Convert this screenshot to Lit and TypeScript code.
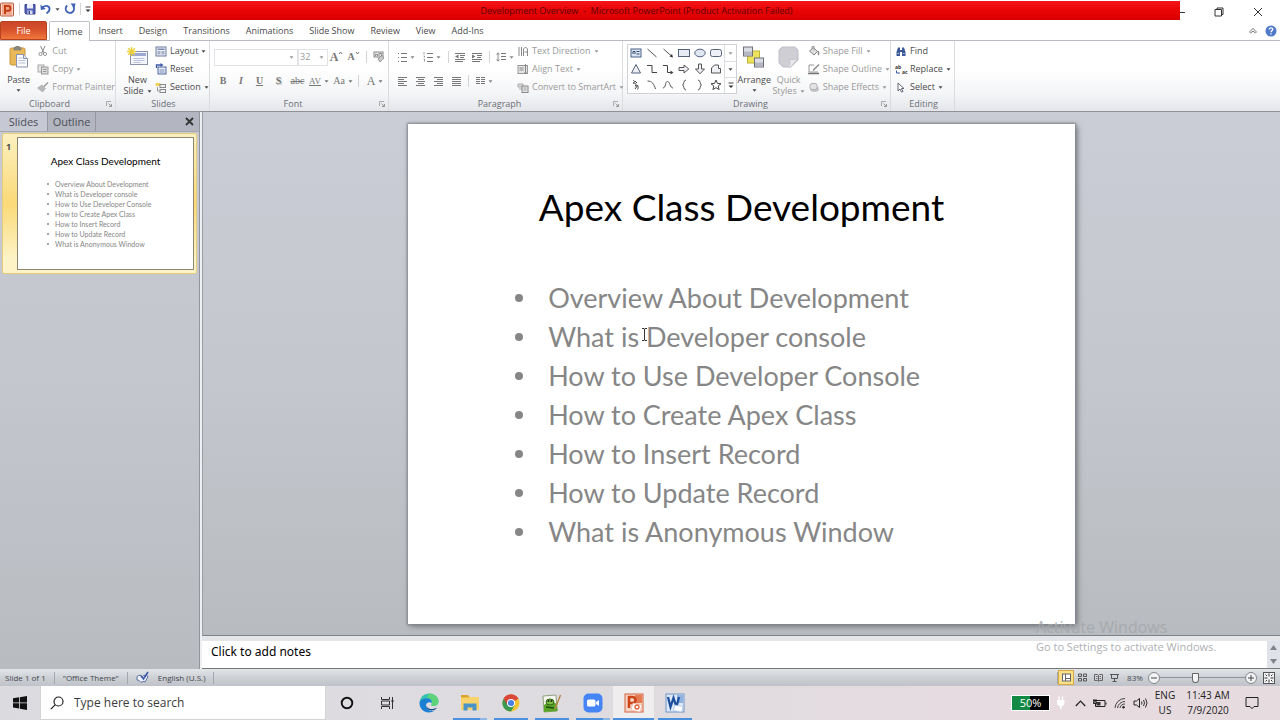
import { LitElement, html, css, svg } from "lit";
import { customElement, state } from "lit/decorators.js";
import { classMap } from "lit/directives/class-map.js";

const icon = (w: number, h: number, body: unknown) =>
  html`<svg width=${w} height=${h} viewBox="0 0 ${w} ${h}" fill="none" aria-hidden="true">${body}</svg>`;

const caret = html`<svg class="caret" width="5" height="3" viewBox="0 0 5 3" aria-hidden="true"><path d="M0.5 0.3h4L2.5 2.8z" fill="currentColor"/></svg>`;

const lines = (rows: number[][], color = "#777") =>
  rows.map(([x, y, w]) => svg`<rect x=${x} y=${y} width=${w} height="1" fill=${color}/>`);

const I = {
  ppt: icon(15, 15, svg`<rect x="0.5" y="1" width="13" height="13" rx="1" fill="#f8d9cd" stroke="#b5583c"/><rect x="2" y="2" width="10" height="11" fill="#f3a98d"/><path d="M5 12V4h3a2.3 2.3 0 0 1 0 4.8H5" stroke="#c43e14" stroke-width="2"/>`),
  save: icon(12, 12, svg`<path d="M1 1.5h10v9.500H2L1 10z" fill="#5360b8" stroke="#39448f"/><rect x="3" y="1" width="6" height="4.500" fill="#eef1fb"/><rect x="3.500" y="7.500" width="5" height="3.500" fill="#d9def0"/><rect x="4.500" y="8" width="1.500" height="3" fill="#39448f"/>`),
  undo: icon(12, 12, svg`<path d="M2.500 4.500C6 1.500 10 3 9.500 6.500 9.200 8.500 8 9.500 6.500 10.500" stroke="#3f62b5" stroke-width="1.800"/><path d="M0.500 1.500l0.300 5.500 5-1z" fill="#3f62b5"/>`),
  redo: icon(12, 12, svg`<path d="M3.200 2.500a4.200 4.200 0 1 0 5.800 0.500" stroke="#3f62b5" stroke-width="1.800"/><path d="M6.500 0.500h5l-1 5z" fill="#3f62b5"/>`),
  customize: icon(6, 7, svg`<path d="M0.500 1h5" stroke="#444"/><path d="M0.500 3.500h5L3 6z" fill="#333"/>`),
  min: icon(5, 10, svg`<path d="M0 5.500h5" stroke="#333"/>`),
  restore: icon(10, 10, svg`<path d="M1 2.500h6.500V9H1zM3 2.500V1h6v6.500H7.500" stroke="#333"/>`),
  close: icon(10, 10, svg`<path d="M1 1l8 8M9 1l-8 8" stroke="#333"/>`),
  collapse: icon(8, 8, svg`<path d="M1.500 6a1.300 1.300 0 0 1 0-2.200L4 1.500l2.500 2.300a1.300 1.300 0 0 1 0 2.200L4 4.200z" stroke="#777"/>`),
  help: icon(12, 12, svg`<circle cx="6" cy="6" r="5.500" fill="#4f79c8"/><path d="M4.200 4.600C4.200 2.200 8 2.300 7.800 4.500 7.700 5.700 6 5.600 6 7.300M6 8.300v1.300" stroke="#fff" stroke-width="1.300"/>`),
  paste: icon(19, 22, svg`<rect x="1" y="2" width="15" height="17" rx="1.500" fill="#e9b959" stroke="#c7963d"/><path d="M5 4V1.500h1.500a2 2 0 0 1 4 0H12V4z" fill="#8a8a80" stroke="#6d6d66" stroke-width="0.500"/><path d="M7.500 8.500h7l4 4v8.500h-11z" fill="#fbfbfe" stroke="#8590ad"/><path d="M14.500 8.500v4h4" fill="#dfe4f2" stroke="#8590ad"/><path d="M9.500 12h4M9.500 14.500h7M9.500 17h7" stroke="#b8c0d6"/>`),
  cut: icon(10, 12, svg`<path d="M2.500 1l3.500 7M7 1L3.800 8" stroke="#888"/><circle cx="2.500" cy="9" r="1.600" stroke="#999"/><circle cx="7" cy="9" r="1.600" stroke="#999"/>`),
  copy: icon(12, 11, svg`<rect x="1" y="1" width="6" height="7" fill="#e6e6e6" stroke="#aaa"/><rect x="4.500" y="3" width="6.500" height="7" fill="#ddd" stroke="#999"/><path d="M6 5.500h3.500M6 7.500h3.500" stroke="#999"/>`),
  brush: icon(12, 11, svg`<path d="M11 0.500L7 4.500" stroke="#999" stroke-width="1.500"/><path d="M5 3l3.500 3.500L5.500 10 0.500 6z" fill="#b9b9b9" stroke="#999" stroke-width="0.500"/>`),
  newSlide: icon(22, 20, svg`<rect x="3.500" y="4.500" width="17" height="13" fill="#f4f6fc" stroke="#8a93ae"/><rect x="5" y="6" width="14" height="3" fill="#9aa8d2"/><path d="M6.500 11.500h11M6.500 13.500h11M6.500 15.500h7" stroke="#bcc5dd"/><path d="M4.500 0v9M0 4.500h9M1.200 1.200l6.600 6.600M7.800 1.200L1.200 7.800" stroke="#edcf3a" stroke-width="1.400"/>`),
  layout: icon(11, 11, svg`<rect x="0.500" y="1" width="10" height="9" fill="#eef1f8" stroke="#6b7899"/><rect x="2" y="2.500" width="7" height="1.500" fill="#7788b3"/><rect x="2" y="5" width="3" height="3.500" fill="#a4aec8"/><rect x="6" y="5" width="3" height="3.500" fill="#a4aec8"/>`),
  reset: icon(11, 12, svg`<rect x="2.500" y="4" width="8" height="7" fill="#e6ebf7" stroke="#51669f"/><path d="M4 7h5M4 9h5" stroke="#7c8dbb"/><path d="M1 5V2h5" stroke="#3c5aa8" stroke-width="1.400"/><path d="M5 0l3 2-3 2z" fill="#3c5aa8"/>`),
  section: icon(11, 11, svg`<path d="M0 1h5v3H0z" fill="#eed45a"/><rect x="4.500" y="2.500" width="5.500" height="3" fill="#eef1f6" stroke="#888"/><rect x="4.500" y="7.500" width="5.500" height="3" fill="#eef1f6" stroke="#888"/><path d="M2 5v4h2" stroke="#999"/>`),
  launcher: icon(6, 6, svg`<path d="M0.500 5V0.500H5" stroke="#aaa"/><path d="M2.500 2.500l3 3M5.500 3v2.500H3" stroke="#999"/>`),
  eraser: icon(12, 12, svg`<rect x="1" y="1" width="9" height="5" fill="#e6e6e6" stroke="#888"/><path d="M2.500 5V3.500h2V5M6 5V2.500h2.500V5" stroke="#777" stroke-width="0.800"/><path d="M5 8l4-3.500L11 7l-4 4z" fill="#ccc" stroke="#888" stroke-width="0.800"/>`),
  grow: icon(5, 4, svg`<path d="M1 3l1.500-2L4 3" stroke="#777"/>`),
  shrink: icon(5, 4, svg`<path d="M1 1l1.500 2L4 1" stroke="#777"/>`),
  bullets: icon(9, 10, [...lines([[3, 1, 6], [3, 5, 6], [3, 9, 6], [0, 1, 1], [0, 5, 1], [0, 9, 1]])]),
  numbering: icon(10, 10, [...lines([[4, 1, 6], [4, 5, 6], [4, 9, 6]]), svg`<path d="M1 0v2.500M0.500 4h1v1.500M0.500 7h1v2.500" stroke="#888" stroke-width="0.800"/>`]),
  outdent: icon(11, 9, [...lines([[1, 0, 10], [6, 2, 5], [6, 4, 4], [1, 6, 10], [1, 8, 8]]), svg`<path d="M4.500 1.500v4L1 3.500z" fill="#777"/>`]),
  indent: icon(11, 9, [...lines([[1, 0, 10], [6, 2, 5], [6, 4, 4], [1, 6, 10], [1, 8, 8]]), svg`<path d="M1 1.500v4l3.500-2z" fill="#777"/>`]),
  spacing: icon(10, 10, [...lines([[5, 1, 5], [5, 4, 5], [5, 7, 5]]), svg`<path d="M2 1v8M0.500 2.500L2 0.800l1.500 1.700M0.500 7.500L2 9.200l1.500-1.700" stroke="#888"/>`]),
  left: icon(9, 9, lines([[0, 0, 9], [0, 2, 6], [0, 4, 9], [0, 6, 6], [0, 8, 9]])),
  center: icon(9, 9, lines([[0, 0, 9], [2, 2, 6], [0, 4, 9], [2, 6, 6], [0, 8, 9]])),
  right: icon(9, 9, lines([[0, 0, 9], [3, 2, 6], [0, 4, 9], [3, 6, 6], [0, 8, 9]])),
  justify: icon(9, 9, lines([[0, 0, 9], [0, 2, 9], [0, 4, 9], [0, 6, 9], [0, 8, 9]])),
  columns: icon(9, 9, lines([[0, 0, 4], [5, 0, 4], [0, 2, 4], [5, 2, 4], [0, 4, 4], [5, 4, 4], [0, 6, 4], [5, 6, 4]])),
  textDir: icon(11, 11, svg`<path d="M1.500 1v9M4 1v9M6 10V3l2-2 2 2v7M7 6h3" stroke="#888"/>`),
  alignText: icon(11, 11, svg`<rect x="0.500" y="1.500" width="9.500" height="8" fill="#e4e4e4" stroke="#999"/><path d="M2 4h4M2 6h4M8 0v10M7 2l1-1.500L9 2M7 8.500l1 1.500 1-1.500" stroke="#888"/>`),
  smartArt: icon(11, 11, svg`<path d="M0.500 2h5v3h-5zM1.500 7h3" fill="#ddd" stroke="#aaa"/><rect x="4.500" y="4" width="6" height="6.500" fill="#e9e9e9" stroke="#888"/><path d="M6 6h3M6 8h3" stroke="#999"/>`),
  arrange: icon(22, 21, svg`<rect x="4.500" y="4.500" width="12" height="12" fill="#ece25c" stroke="#bdb335"/><rect x="0.500" y="0.500" width="9" height="9" fill="#dcdde4" stroke="#6e6f7a"/><path d="M1 5h8v4H1z" fill="#b5b7c2"/><rect x="11.500" y="11.500" width="9" height="9" fill="#dcdde4" stroke="#6e6f7a"/><path d="M12 16h8v4h-8z" fill="#b5b7c2"/>`),
  quick: icon(21, 22, svg`<path d="M4 1h13l3 3v10l-7 7H5l-4-4V4z" fill="#cfced5" stroke="#c0bfc7"/><path d="M20 12c-3 2-7 2-9 1 2 3 1 6-1 8h3z" fill="#e8e8ec" stroke="#b5b5bd" stroke-width="0.500"/>`),
  fill: icon(11, 11, svg`<path d="M1 5l4-3.500 4 4L5.500 9z" fill="#ddd" stroke="#888"/><path d="M3.500 3V0.500h2V4" stroke="#999"/><path d="M9 5c1.500 1.500 1.500 3 0.500 4" stroke="#888" stroke-width="1.300"/>`),
  outline: icon(12, 11, svg`<path d="M6 1H1v7h9" stroke="#999"/><path d="M11 0.500L5 6.500" stroke="#888" stroke-width="1.400"/><path d="M0 9.500h11" stroke="#777" stroke-width="1.500"/>`),
  effects: icon(11, 11, svg`<ellipse cx="6" cy="7" rx="4.500" ry="3" fill="#c4c4c8"/><rect x="1.500" y="1.500" width="7" height="6" rx="2" fill="#e2e2e5" stroke="#b0b0b4"/>`),
  find: icon(11, 11, svg`<path d="M1 10V6l1.500-4.500h2V10zM10 10V6L8.500 1.500h-2V10z" fill="#3b5998"/><path d="M4 4h3v2H4z" fill="#3b5998"/><path d="M1.800 7.500h1.800M7.300 7.500h1.800" stroke="#a9bbe2"/>`),
  replace: icon(12, 12, svg`<text x="0" y="6" class="g">ab</text><text x="7" y="11" class="g">ac</text><path d="M1.500 7.500v2.500h3.500" stroke="#3b5998"/>`),
  select: icon(8, 11, svg`<path d="M1 1v8l2-2 1.500 3L6 9.500 4.500 6.500H7z" fill="#fff" stroke="#667"/>`),
  spell: icon(14, 13, svg`<path d="M1 5.500C3 4 5 4 6.500 5.500 8 4 10 4 12 5.500L9 11c-1.500-1-3-.5-4 .5C4 10 2.500 9 1 9z" fill="#eef1fa" stroke="#5b70a5"/><path d="M5 5l2.500 3L12 1" stroke="#3b57a6" stroke-width="1.600"/>`),
  vNormal: icon(9, 9, svg`<rect x="0.500" y="1" width="8" height="7" fill="#fff" stroke="#666"/><path d="M3.500 1v7M3.500 5.500h5" stroke="#666"/>`),
  vSorter: icon(9, 9, svg`<path d="M0.500 1h3v2.500h-3zM5.500 1h3v2.500h-3zM0.500 5.500h3V8h-3zM5.500 5.500h3V8h-3z" stroke="#555"/>`),
  vRead: icon(9, 9, svg`<path d="M4.500 2v6M0.500 1.500h3l1 1 1-1h3v6h-3l-1 1-1-1h-3z" stroke="#666"/><path d="M2 3.500h1.500M2 5.500h1.500M5.500 3.500H7M5.500 5.500H7" stroke="#777"/>`),
  vShow: icon(9, 9, svg`<path d="M0 1.500h9M1.500 1.500v4h6v-4M4.500 5.500V8M2.500 8.500h4" stroke="#555"/>`),
  fit: icon(12, 12, svg`<rect x="0.500" y="0.500" width="11" height="11" fill="#f2f3f5" stroke="#555"/><path d="M6 1.500v3M6 7.500v3M1.500 6h3M7.500 6h3M2.500 2.500L4 4M9.500 2.500L8 4M2.500 9.500L4 8M9.500 9.500L8 8" stroke="#333"/>`),
  windows: icon(14, 14, svg`<path d="M0 2.200L6 1.300v5.200H0zM6.800 1.200L14 0v6.500H6.800zM0 7.300h6v5.200l-6-.9zM6.800 7.300H14V14l-7.200-1.200z" fill="#111"/>`),
  search: icon(14, 14, svg`<circle cx="8.500" cy="5.500" r="4.500" stroke="#222" stroke-width="1.200"/><path d="M5.300 8.700L0.800 13.200" stroke="#222" stroke-width="1.200"/>`),
  cortana: icon(14, 14, svg`<circle cx="7" cy="7" r="5.300" stroke="#111" stroke-width="1.900"/>`),
  taskView: icon(15, 14, svg`<path d="M1.500 1v2.500h8V1M1.500 13v-2.500h8V13M1.500 5h8v4h-8zM12.500 1v12" stroke="#333"/><rect x="11.500" y="4" width="2" height="2" fill="#333"/>`),
  edge: icon(20, 20, svg`<path d="M0.500 10C1 4 5 0.500 10 0.500c6 0 9.500 4 9.500 8 0 3-2.500 4.500-5 4.500-2 0-2.500-.8-2-1.700C13.500 9 11.500 6.500 8 6.500 4 6.500 1 8.500 0.500 10z" fill="#35c1b1"/><path d="M10 0.500c6 0 9.500 4 9.500 8 0 3-2.500 4.500-5 4.500-2 0-2.500-.8-2-1.700C14 8 12 5 8 4.500z" fill="#5fd37a"/><path d="M0.500 10C1 7 4 5.500 7.500 5.500c3.500 0 5.500 2 5.300 4.500C11 8.500 7 9 7 12.500c0 3.500 4 6.500 9 5C9 22 .5 18 0.500 10z" fill="#1b7fd4"/><path d="M7 12c-.3 4 4 6.500 8 5 1.500-.6 2.500-1.500 3-2.500-5 3-11 1-11-2.500z" fill="#114a8b"/>`),
  folder: icon(20, 18, svg`<path d="M1 1h7l2 2h9v13H1z" fill="#f8d36b"/><path d="M1 1h7l1.500 2.500H1z" fill="#d9a52f"/><path d="M3.500 16.500V9.500h13v7h-4v-3h-5v3z" fill="#4a93c8"/>`),
  chrome: icon(18, 18, svg`<circle cx="9" cy="9" r="8.500" fill="#f3c532"/><path d="M9 9L1.600 4.700A8.500 8.500 0 0 1 16.400 4.700z" fill="#d8473a"/><path d="M9 9L1.600 4.700A8.500 8.500 0 0 0 9 17.500l3.700-6.300z" fill="#3a9a52"/><path d="M9 5h7.500a8.500 8.500 0 0 0-14.800-.3L5.300 11z" fill="#d8473a"/><circle cx="9" cy="9" r="4" fill="#fff"/><circle cx="9" cy="9" r="3.100" fill="#4a80e4"/>`),
  notepad: icon(20, 19, svg`<path d="M1 2l13-1 1 16-13 1z" fill="#f6f8ef" stroke="#8fa07e"/><path d="M2 11c4-3 9-3 13-1l.5 7L2 18z" fill="#5aa628"/><ellipse cx="8" cy="8" rx="4" ry="3" fill="#7fc142" stroke="#2e641a"/><circle cx="6.500" cy="7" r="1" fill="#222"/><circle cx="9.500" cy="7" r="1" fill="#222"/><path d="M4 13l8 1" stroke="#1e4d12" stroke-width="1.500"/><path d="M18.500 1L13 15" stroke="#b98a4a" stroke-width="1.500"/>`),
  zoom: icon(20, 20, svg`<rect x="0.500" y="0.500" width="19" height="19" rx="5" fill="#4585f5"/><rect x="4" y="6.500" width="8.500" height="7" rx="1.500" fill="#fff"/><path d="M13 9l3-2v6l-3-2z" fill="#fff"/>`),
  pptBig: icon(20, 20, svg`<rect x="1" y="1" width="18" height="18" fill="#f7d6c8" stroke="#d0623c"/><path d="M11 2h7v8h-7z" fill="#e57b50"/><path d="M5 15V4h3.500a3 3 0 0 1 0 6H5" stroke="#cf4416" stroke-width="2.600"/><path d="M9 10l9 2-2 7-9-2z" fill="#fff" stroke="#e0a590" stroke-width="0.600"/><circle cx="13" cy="14" r="2" stroke="#e0603a" stroke-width="1.300"/>`),
  word: icon(20, 20, svg`<rect x="1" y="1" width="18" height="18" fill="#dfe9f7" stroke="#6f93c6"/><path d="M12 2h6v8h-6z" fill="#8fb2e0"/><path d="M3 4l2.500 10L8.500 5l3 9L14 4" stroke="#1c4f9f" stroke-width="2.300"/><path d="M10 12l8 1.500-1.500 5.500-8-1.500z" fill="#fff" stroke="#9db9df" stroke-width="0.600"/>`),
  plug: icon(9, 14, svg`<path d="M3 0.500V4M6.500 0.500V4" stroke="#fff" stroke-width="1.300"/><path d="M1 4h7.500v3a3.500 3.500 0 0 1-3 3.200V13H4v-2.800A3.500 3.500 0 0 1 1 7z" fill="#fff"/>`),
  up: icon(11, 7, svg`<path d="M0.800 6L5.500 1.200 10.200 6" stroke="#222" stroke-width="1.200"/>`),
  battery: icon(14, 9, svg`<path d="M4 1.500h8v6H2.500V5" stroke="#222"/><path d="M13 3.500v2" stroke="#222"/><path d="M0 1.500h4M1 0v3M3 0v3M0.500 3h3v1.500h-3z" stroke="#222"/><rect x="3.500" y="3" width="4" height="3.500" fill="#333"/>`),
  wifi: icon(12, 12, svg`<path d="M1 11A10 10 0 0 1 11 1.500M3.500 11A7.500 7.500 0 0 1 11 4.500M6 11a5 5 0 0 1 5-4" stroke="#444"/><circle cx="9.500" cy="10.300" r="1.200" fill="#222"/>`),
  sound: icon(15, 12, svg`<path d="M1 4h2.500L6.500 1.500v9L3.500 8H1z" stroke="#222"/><path d="M8.500 4.500q1 1.500 0 3M10.500 3q2 3 0 6M12.500 1.500q3 4.500 0 9" stroke="#333"/>`),
  notify: icon(14, 14, svg`<path d="M1 1.500h12v9H9L7 12.700 5 10.500H1z" stroke="#222"/>`),
};

const shapes = [
  svg`<rect x="1" y="2" width="10" height="8" fill="#dbe6f5" stroke="#4a5f87"/><path d="M3 7V4.500h2V7M6.500 4.500h3M6.500 7h3" stroke="#34496f"/>`,
  svg`<path d="M1.500 2l9 8" stroke="#555"/>`,
  svg`<path d="M1.500 2l8 7" stroke="#555"/><path d="M11 10.500L7.500 9.500 10 7z" fill="#333"/>`,
  svg`<rect x="0.500" y="2.500" width="11" height="7" fill="#e6ebf4" stroke="#55627d"/>`,
  svg`<ellipse cx="6" cy="6" rx="5.200" ry="3.800" fill="#dfe7f3" stroke="#55627d"/>`,
  svg`<rect x="0.500" y="2.500" width="11" height="7" rx="2" fill="#eef0f5" stroke="#55627d"/>`,
  svg`<path d="M6 1.500l4.500 8.500h-9z" fill="#eef0f5" stroke="#55627d"/>`,
  svg`<path d="M1 2.500h5v7h5" stroke="#444"/>`,
  svg`<path d="M1 2.500h4.500v7H9" stroke="#444"/><path d="M11.500 9.500L8.500 7.500v4z" fill="#444"/>`,
  svg`<path d="M1 4.500h5V2l4.800 4L6 10V7.500H1z" fill="#eef0f5" stroke="#555"/>`,
  svg`<path d="M4.500 1v5H1.500L6 10.800 10.500 6h-3V1z" fill="#eef0f5" stroke="#555"/>`,
  svg`<path d="M1.500 10V5l3-3h4v3.500h2V10z" fill="#eef0f5" stroke="#555"/>`,
  svg`<path d="M3 1.500c2 0 2 2 0 2.500 3 0 4 1 2 3 3-1 4 1 2.500 3.500M5 2l2 2M8 6l-3 4" stroke="#444"/>`,
  svg`<path d="M1.500 2C6 2 8 5 9.500 10" stroke="#555"/>`,
  svg`<path d="M1 9c3 0 2-6.500 4.500-6.500S8 9 11 9" stroke="#555"/>`,
  svg`<path d="M8 1C5 1 6.500 5.500 4.500 6 6.500 6.500 5 11 8 11" stroke="#555"/>`,
  svg`<path d="M4 1c3 0 1.500 4.500 3.500 5C5.500 6.500 7 11 4 11" stroke="#555"/>`,
  svg`<path d="M6 1l1.400 3.400 3.600.3-2.800 2.300.9 3.600L6 8.700l-3.100 1.900.9-3.600L1 4.700l3.600-.3z" stroke="#444"/>`,
];

const topics = [
  "Overview About Development",
  "What is Developer console",
  "How to Use Developer Console",
  "How to Create Apex Class",
  "How to Insert Record",
  "How to Update Record",
  "What is Anonymous Window",
];

const tabs = ["Home", "Insert", "Design", "Transitions", "Animations", "Slide Show", "Review", "View", "Add-Ins"];

@customElement("slide-page")
class SlidePage extends LitElement {
  static styles = css`
    :host { display: block; background: #fff; color: #000; font-family: Lato, "Open Sans", sans-serif; }
    h1 { margin: 0; text-align: center; font-weight: 400; font-size: 37px; line-height: 48px; padding-top: 59px; }
    ul { list-style: none; margin: 0; padding: 47px 0 0 107px; color: #868686; }
    li { display: grid; grid-template-columns: 33px 1fr; align-items: center; font-size: 27px; line-height: 39px; white-space: nowrap; }
    li::before { content: ""; width: 8px; height: 8px; border-radius: 50%; background: #868686; }
    :host([compact]) h1 { font-size: 10px; line-height: 12px; padding-top: 17px; }
    :host([compact]) ul { padding: 12px 0 0 29px; }
    :host([compact]) li { font-size: 7px; line-height: 10px; grid-template-columns: 8px 1fr; }
    :host([compact]) li::before { width: 2px; height: 2px; }
  `;
  render() {
    return html`<h1>Apex Class Development</h1><ul>${topics.map((t) => html`<li>${t}</li>`)}</ul>`;
  }
}

@customElement("app-root")
class AppRoot extends LitElement {
  @state() private tab = "Home";

  static styles = css`
    :host { display: flex; flex-direction: column; height: 100vh; overflow: hidden; position: relative;
      font: 9px/12px "Open Sans", "Noto Sans", sans-serif; color: #4a4a4a; background: #fff; }
    * { box-sizing: border-box; }
    svg { display: block; flex: none; }
    button { font: inherit; color: inherit; background: none; border: 0; padding: 0; margin: 0; display: flex; align-items: center; justify-content: center; gap: 3px; white-space: nowrap; }
    .g { font: bold 5px/5px "Open Sans", sans-serif; fill: #333; }
    .dim { color: #999; }
    .sep { flex: none; width: 1px; height: 12px; background: #d2d4d8; justify-self: center; }

    .titlebar { display: flex; height: 20px; flex: none; }
    .quick { width: 93px; display: flex; align-items: center; gap: 4px; padding-bottom: 2px; }
    .title { flex: 1; margin-top: 1px; display: flex; align-items: center; justify-content: center; background: linear-gradient(#f5161a, #e80405 50%, #d90000); color: #5c0505; }
    .window { width: 100px; display: flex; align-items: center; justify-content: space-between; padding: 4px 17px 0 0; }

    .tabs { display: flex; height: 21px; flex: none; padding-top: 1px; border-bottom: 1px solid #b9bcc3; }
    .file { width: 47px; color: #fff; margin-right: 2px; border-radius: 2px 2px 0 0; border: 1px solid #b8421e; background: linear-gradient(#c9472a, #d7502b 45%, #f0793c); }
    .tab { padding: 0 7px; border: 1px solid transparent; border-bottom: 0; }
    .tab.on { background: #fff; border-color: #bfc2c8; border-radius: 2px 2px 0 0; margin-bottom: -1px; }
    .tools { margin-left: auto; display: flex; align-items: center; gap: 8px; padding-right: 3px; }

    .ribbon { display: flex; height: 71px; flex: none; background: linear-gradient(#fff 40%, #f4f5f7 75%, #e4e6ea); border-bottom: 1px solid #8d9096; }
    .group { display: flex; flex-direction: column; border-right: 1px solid #dadce0; padding: 1px 0 0 4px; }
    .body { flex: 1; display: flex; }
    .foot { display: grid; align-items: center; text-align: center; height: 14px; padding-right: 2px; color: #6c6f76; }
    .foot.launch { grid-template-columns: 1fr 14px; }
    .foot button { justify-content: flex-end; padding-right: 1px; }
    .clip { width: 116px; padding-left: 0; } .slides { width: 94px; } .font { width: 179px; } .para { width: 234px; } .draw { width: 268px; } .edit { width: 64px; }
    .big { flex-direction: column; justify-content: flex-start; gap: 0; width: 37px; padding-top: 4px; }
    .clip .big { width: 38px; }
    .big > svg:first-child { height: 22px; margin-bottom: 6px; }
    .big .caret { margin-top: 3px; }
    .big .row { display: flex; align-items: center; gap: 3px; line-height: 10px; }
    .big .row .caret { margin-top: 0; }
    .slides .big { width: 35px; }
    .list { display: grid; grid-template-rows: repeat(3, 18px); justify-items: start; align-content: start; }
    .list button > svg:first-child { width: 12px; overflow: visible; }
    .draw .list { padding-left: 2px; }
    .stack { display: grid; grid-template-rows: 24px 24px; align-content: start; padding-top: 3px; color: #888; }
    .cells { display: grid; align-items: center; }
    .f1 { grid-template-columns: 84px 30px 17px 17px 8px 18px; }
    .f2 { grid-template-columns: 18px 18px 19px 19px 19px 24px 24px 6px 28px; }
    .p1 { grid-template-columns: 26px 26px 6px 17px 17px 8px 24px; }
    .p2 { grid-template-columns: 18px 18px 18px 18px 6px 26px; }
    .pick { display: flex; align-items: center; border: 1px solid #e2e3e6; height: 17px; padding-right: 3px; color: #999; background: #fff; }
    .pick select { appearance: none; border: 0; background: none; font: inherit; color: inherit; flex: 1; min-width: 0; padding: 0 0 0 1px; }
    .serif { font: 700 10px/12px "Liberation Serif", serif; color: #777; }
    .sized { gap: 0; align-items: flex-start; }
    .i { font-style: italic; } .u { text-decoration: underline; } .s { text-decoration: line-through; font-weight: 400; }
    .shade { text-shadow: 1px 1px 0 #bbb; }
    .lg { font-size: 12px; } .kern { text-decoration: underline; font-weight: 400; font-size: 9px; }
    .av { font-weight: 400; }
    .gallery { display: grid; grid-template-columns: 1fr 12px; width: 110px; height: 50px; border: 1px solid #cfd1d6; background: #fff; margin-top: 2px; }
    .shapes { display: grid; grid-template-columns: repeat(6, 16px); grid-template-rows: repeat(3, 16px); }
    .scroll { display: grid; grid-template-rows: repeat(3, 1fr); border-left: 1px solid #dcdde1; }
    .scroll button + button { border-top: 1px solid #dcdde1; }

    .main { flex: 1; display: grid; grid-template-columns: 200px 1fr; min-height: 0; }
    .pane { display: flex; flex-direction: column; border-right: 1px solid #92959c; background: linear-gradient(#c8cbd4, #c3c6cd 50%, #b8bcc0); }
    .panetabs { display: flex; height: 20px; background: #b3b6c0; border-bottom: 1px solid #a3a6af; font-size: 11px; }
    .panetabs button { width: 48px; color: #4c4f57; border-right: 1px solid #9497a0; }
    .panetabs .cur { background: #c6c9d3; }
    .panetabs .x { margin-left: auto; width: 20px; border: 0; }
    .thumb { margin: 1px 2px 0 2px; height: 141px; display: grid; grid-template-columns: 12px 1fr; padding: 4px 3px; border: 1px solid #e5cd7b; border-radius: 2px; background: linear-gradient(#fbf0c0, #fada78 50%, #fdf3c6 90%); }
    .num { font: 700 9px/12px "Open Sans", sans-serif; padding-top: 3px; }
    .thumb slide-page { outline: 1px solid #8d8774; height: 131px; }
    .right { display: flex; flex-direction: column; min-width: 0; min-height: 0; border-left: 2px solid #eef0f3; }
    .stage { flex: 1; min-height: 0; padding: 12px 0 11px; display: flex; justify-content: center; background: linear-gradient(#cacdd6, #c4c7cd 50%, #b8bbbf); border-bottom: 1px solid #7f8388; border-left: 1px solid #9a9da4; }
    .sheet { position: relative; height: 100%; aspect-ratio: 4 / 3; }
    .sheet slide-page { height: 100%; box-shadow: 0 0 2px 1px #85888e, 2px 2px 6px #6a6d72; }
    .ibeam { position: absolute; left: 233px; top: 204px; }
    .notes { height: 33px; display: flex; border-top: 5px solid #e4e6ea; border-bottom: 1px solid #777; }
    .notes textarea { flex: 1; border: 0; resize: none; padding: 3px 9px; font: 12px/16px "Noto Sans", "Open Sans", sans-serif; overflow: hidden; }
    .notes textarea::placeholder { color: #000; opacity: 1; }
    .nscroll { width: 13px; background: #dfe2e8; display: grid; color: #80838a; }
    .mark { position: absolute; left: 1036px; bottom: 65px; margin: 0; color: #a6a9ad; opacity: .9; pointer-events: none; font-size: 11px; line-height: 16px; }
    .mark b { display: block; font-weight: 400; font-size: 16px; line-height: 24px; }

    .status { height: 17px; flex: none; display: flex; align-items: center; gap: 8px; padding-left: 5px; background: linear-gradient(#e3e5e9, #cdd0d5 50%, #bfc3c9); color: #44474d; font-size: 8px; }
    .status .sep { background: #a4a7ad; }
    .views { margin-left: auto; display: flex; align-items: center; }
    .views button { width: 16px; height: 15px; }
    .views .on { background: #fbe08a; outline: 1px solid #d9a93f; outline-offset: -1px; }
    .views .pct { width: 26px; }
    .views .round { width: 12px; height: 12px; border: 1px solid #83868d; border-radius: 50%; background: #f3f4f6; }
    .range { width: 85px; height: 12px; margin: 0; appearance: none; background: linear-gradient(#8f939a, #8f939a) center / 100% 1px no-repeat; }
    .range::-webkit-slider-thumb { appearance: none; width: 7px; height: 10px; border: 1px solid #666; border-radius: 1px 1px 4px 4px; background: #f5f5f7; }
    .views .fit { margin: 0 3px 0 4px; }

    .taskbar { height: 34px; flex: none; display: flex; background: linear-gradient(90deg, #dbdbdf, #dfdce0 50%, #e7dbe0 80%, #e6dbdf); color: #222; }
    .start { width: 40px; }
    .find { width: 286px; display: flex; align-items: center; gap: 10px; padding: 0 9px; background: #fff; border: 1px solid #d3d3d6; border-top: 0; }
    .find input { flex: 1; border: 0; outline: 0; font: 12px/16px "Open Sans", sans-serif; padding: 0; }
    .find input::placeholder { color: #3c3c3c; opacity: 1; }
    .app { width: 41px; position: relative; }
    .app.run::after { content: ""; position: absolute; left: 4px; right: 3px; bottom: 0; height: 2px; background: #4a90de; }
    .app.more::after { background: linear-gradient(90deg, #4a90de 27px, #8db8e6 27px); }
    .app.now { background: #f0edef; }
    .app.now::after { left: 0; right: 0; }
    .tray { margin-left: auto; display: flex; align-items: center; }
    .pct50 { width: 39px; height: 16px; display: grid; place-items: center; border: 1px solid #fff; color: #fff; font-size: 11px; line-height: 12px; background: linear-gradient(90deg, #138a43 50%, #000 50%); }
    .tray .t { width: 20px; justify-content: center; display: flex; }
    .tray .lang { width: 30px; text-align: center; font-size: 10px; line-height: 15px; }
    .tray .clock { width: 56px; text-align: center; font-size: 10px; line-height: 15px; }
    .tray .n { width: 32px; margin-right: 12px; }
  `;

  private b(ic: unknown, label: string, menu = false, dim = false) {
    return html`<button class=${classMap({ dim })}>${ic}<span>${label}</span>${menu ? caret : ""}</button>`;
  }

  private foot(label: string, launch = true) {
    return html`<div class=${classMap({ foot: true, launch })}><span>${label}</span>${launch ? html`<button aria-label="${label} options">${I.launcher}</button>` : ""}</div>`;
  }

  private ribbon() {
    return html`<section class="ribbon">
      <div class="group clip"><div class="body">
        <button class="big">${I.paste}<span>Paste</span>${caret}</button>
        <div class="list">${this.b(I.cut, "Cut", false, true)}${this.b(I.copy, "Copy", true, true)}${this.b(I.brush, "Format Painter", false, true)}</div>
      </div>${this.foot("Clipboard")}</div>
      <div class="group slides"><div class="body">
        <button class="big">${I.newSlide}<span>New</span><span class="row">Slide ${caret}</span></button>
        <div class="list">${this.b(I.layout, "Layout", true)}${this.b(I.reset, "Reset")}${this.b(I.section, "Section", true)}</div>
      </div>${this.foot("Slides", false)}</div>
      <div class="group font"><div class="body"><div class="stack">
        <div class="cells f1">
          <span class="pick"><select aria-label="Font"><option></option></select>${caret}</span>
          <span class="pick"><select aria-label="Font size"><option>32</option></select>${caret}</span>
          <button class="serif lg sized" aria-label="Grow font">A${I.grow}</button><button class="serif sized" aria-label="Shrink font">A${I.shrink}</button>
          <i class="sep"></i><button aria-label="Clear formatting">${I.eraser}</button>
        </div>
        <div class="cells f2">
          <button class="serif">B</button><button class="serif i">I</button><button class="serif u">U</button><button class="serif shade">S</button>
          <button class="serif s">abc</button><button class="serif kern">AV${caret}</button><button class="serif av">Aa ${caret}</button>
          <i class="sep"></i><button class="serif lg av">A ${caret}</button>
        </div></div>
      </div>${this.foot("Font")}</div>
      <div class="group para"><div class="body"><div class="stack">
        <div class="cells p1">
          <button aria-label="Bullets">${I.bullets}${caret}</button><button aria-label="Numbering">${I.numbering}${caret}</button><i class="sep"></i>
          <button aria-label="Decrease indent">${I.outdent}</button><button aria-label="Increase indent">${I.indent}</button><i class="sep"></i>
          <button aria-label="Line spacing">${I.spacing}${caret}</button>
        </div>
        <div class="cells p2">
          <button aria-label="Align left">${I.left}</button><button aria-label="Center">${I.center}</button><button aria-label="Align right">${I.right}</button>
          <button aria-label="Justify">${I.justify}</button><i class="sep"></i><button aria-label="Columns">${I.columns}${caret}</button>
        </div></div>
        <div class="list">${this.b(I.textDir, "Text Direction", true, true)}${this.b(I.alignText, "Align Text", true, true)}${this.b(I.smartArt, "Convert to SmartArt", true, true)}</div>
      </div>${this.foot("Paragraph")}</div>
      <div class="group draw"><div class="body">
        <div class="gallery"><div class="shapes">${shapes.map((s) => html`<button aria-label="Shape">${icon(12, 12, s)}</button>`)}</div>
          <div class="scroll"><button aria-label="Up" class="dim">${caret}</button><button aria-label="Down">${caret}</button><button aria-label="More">${I.customize}</button></div></div>
        <button class="big">${I.arrange}<span>Arrange</span>${caret}</button>
        <button class="big dim">${I.quick}<span>Quick</span><span class="row">Styles ${caret}</span></button>
        <div class="list">${this.b(I.fill, "Shape Fill", true, true)}${this.b(I.outline, "Shape Outline", true, true)}${this.b(I.effects, "Shape Effects", true, true)}</div>
      </div>${this.foot("Drawing")}</div>
      <div class="group edit"><div class="body">
        <div class="list">${this.b(I.find, "Find")}${this.b(I.replace, "Replace", true)}${this.b(I.select, "Select", true)}</div>
      </div>${this.foot("Editing", false)}</div>
    </section>`;
  }

  render() {
    const sep = html`<i class="sep"></i>`;
    return html`
      <header class="titlebar">
        <div class="quick">${I.ppt}${sep}<button aria-label="Save">${I.save}</button><button aria-label="Undo">${I.undo}${caret}</button><button aria-label="Redo">${I.redo}</button>${sep}<button aria-label="Customize">${I.customize}</button></div>
        <div class="title">Development Overview &nbsp;- &nbsp;Microsoft PowerPoint (Product Activation Failed)</div>
        <div class="window"><button aria-label="Minimize">${I.min}</button><button aria-label="Restore">${I.restore}</button><button aria-label="Close">${I.close}</button></div>
      </header>
      <nav class="tabs"><button class="file">File</button>
        ${tabs.map((t) => html`<button class=${classMap({ tab: true, on: t === this.tab })} @click=${() => (this.tab = t)}>${t}</button>`)}
        <div class="tools"><button aria-label="Minimize ribbon">${I.collapse}</button><button aria-label="Help">${I.help}</button></div>
      </nav>
      ${this.ribbon()}
      <main class="main">
        <aside class="pane">
          <div class="panetabs"><button class="cur">Slides</button><button>Outline</button><button class="x" aria-label="Close pane"><svg width="9" height="9" viewBox="0 0 9 9"><path d="M1 1l7 7M8 1L1 8" stroke="#333" stroke-width="1.800"/></svg></button></div>
          <div class="thumb"><span class="num">1</span><slide-page compact></slide-page></div>
        </aside>
        <div class="right">
          <div class="stage"><div class="sheet"><slide-page></slide-page>
            <svg class="ibeam" width="7" height="13" viewBox="0 0 7 13"><path d="M1 .5h2l.5.500.5-.5h2M1 12.500h2l.5-.5.5.500h2M3.500 1v11" stroke="#333" fill="none"/></svg></div></div>
          <div class="notes"><textarea aria-label="Notes" placeholder="Click to add notes"></textarea>
            <div class="nscroll"><button aria-label="Scroll up"><svg width="7" height="5"><path d="M0 5h7L3.500 0z" fill="currentColor"/></svg></button><button aria-label="Scroll down"><svg width="7" height="5"><path d="M0 0h7L3.500 5z" fill="currentColor"/></svg></button></div></div>
        </div>
      </main>
      <footer class="status">
        <span>Slide 1 of 1</span>${sep}<span>"Office Theme"</span>${sep}<button aria-label="Spelling">${I.spell}</button><span>English (U.S.)</span>${sep}
        <div class="views">${sep}
          <button class="on" aria-label="Normal">${I.vNormal}</button><button aria-label="Slide sorter">${I.vSorter}</button><button aria-label="Reading view">${I.vRead}</button><button aria-label="Slide show">${I.vShow}</button>
          <button class="pct">83%</button><button class="round" aria-label="Zoom out"><svg width="6" height="6"><path d="M0 3h6" stroke="#444"/></svg></button>
          <input class="range" type="range" aria-label="Zoom" min="0" max="100" value="41">
          <button class="round" aria-label="Zoom in"><svg width="6" height="6"><path d="M0 3h6M3 0v6" stroke="#444"/></svg></button>
          <button class="fit" aria-label="Fit slide">${I.fit}</button></div>
      </footer>
      <div class="taskbar">
        <button class="start" aria-label="Start">${I.windows}</button>
        <label class="find">${I.search}<input aria-label="Search" placeholder="Type here to search"></label>
        <button class="app" aria-label="Cortana">${I.cortana}</button><button class="app" aria-label="Task view">${I.taskView}</button><button class="app" aria-label="Edge">${I.edge}</button>
        <button class="app run more" aria-label="Explorer">${I.folder}</button><button class="app run" aria-label="Chrome">${I.chrome}</button><button class="app run" aria-label="Notepad++">${I.notepad}</button>
        <button class="app run more" aria-label="Zoom">${I.zoom}</button><button class="app run now" aria-label="PowerPoint">${I.pptBig}</button><button class="app run" aria-label="Word">${I.word}</button>
        <div class="tray"><span class="pct50">50%</span><span class="t">${I.plug}</span><span class="t">${I.up}</span><span class="t">${I.battery}</span><span class="t">${I.wifi}</span><span class="t">${I.sound}</span>
          <span class="lang">ENG<br>US</span><span class="clock">11:43 AM<br>7/9/2020</span><button class="n" aria-label="Notifications">${I.notify}</button></div>
      </div>
      <p class="mark"><b>Activate Windows</b>Go to Settings to activate Windows.</p>`;
  }
}
